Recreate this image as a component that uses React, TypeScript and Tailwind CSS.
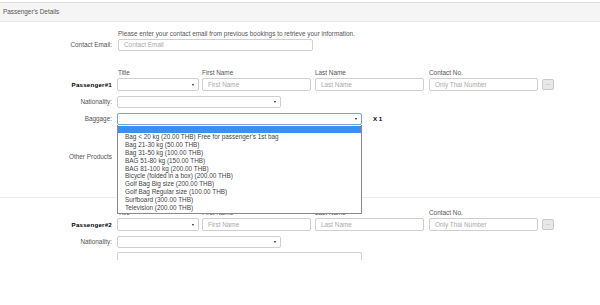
const font = { fontFamily: '"Liberation Sans", Arial, sans-serif' };

const baggageOptions = [
  "Bag < 20 kg (20.00 THB) Free for passenger's 1st bag",
  "Bag 21-30 kg (50.00 THB)",
  "Bag 31-50 kg (100.00 THB)",
  "BAG 51-80 kg (150.00 THB)",
  "BAG 81-100 kg (200.00 THB)",
  "Bicycle (folded in a box) (200.00 THB)",
  "Golf Bag Big size (200.00 THB)",
  "Golf Bag Regular size (100.00 THB)",
  "Surfboard (300.00 THB)",
  "Television (200.00 THB)",
];

function Label({ children, bold }: { children: React.ReactNode; bold?: boolean }) {
  return (
    <div
      className={
        bold
          ? "w-[112px] shrink-0 text-right text-[6.2px] font-bold tracking-[0.2px] text-black"
          : "w-[112px] shrink-0 text-right text-[6.4px] text-[#555]"
      }
    >
      {children}
    </div>
  );
}

function Select({ width, focused }: { width: string; focused?: boolean }) {
  return (
    <div
      className={`relative h-full ${width} rounded-[2px] border bg-white ${
        focused ? "border-[#7fa3cc]" : "border-[#cfcfcf]"
      }`}
    >
      <span className="absolute right-[4px] top-1/2 -translate-y-1/2 border-x-[1.5px] border-t-[2.5px] border-x-transparent border-t-[#222]" />
    </div>
  );
}

function Input({ width, placeholder }: { width: string; placeholder: string }) {
  return (
    <div
      className={`flex h-full items-center ${width} rounded-[2px] border border-[#cfcfcf] bg-white pl-[5px] text-[6.4px] text-[#aaa]`}
    >
      {placeholder}
    </div>
  );
}

function NameRow({ n }: { n: number }) {
  return (
    <>
      <div className="flex h-[8px] items-center text-[6.4px] leading-[8px] text-[#555]">
        <div className="w-[118px] shrink-0" />
        <div className="w-[84px]">Title</div>
        <div className="w-[113px]">First Name</div>
        <div className="w-[114px]">Last Name</div>
        <div>Contact No.</div>
      </div>
      <div className="mt-[1px] flex h-[13px] items-center">
        <Label bold>Passenger#{n}</Label>
        <div className="ml-[5px] flex h-full items-center">
          <Select width="w-[82px]" />
          <div className="ml-[3px] h-full">
            <Input width="w-[109px]" placeholder="First Name" />
          </div>
          <div className="ml-[4px] h-full">
            <Input width="w-[109px]" placeholder="Last Name" />
          </div>
          <div className="ml-[5px] h-full">
            <Input width="w-[109px]" placeholder="Only Thai Number" />
          </div>
          <div className="ml-[4px] flex h-[11px] w-[12px] items-center justify-center rounded-[2px] border border-[#c8c8c8] bg-[#e8e8e8] pb-[3px] text-[6px] text-[#888]">
            ...
          </div>
        </div>
      </div>
      <div className="mt-[5px] flex h-[12px] items-center">
        <Label>Nationality:</Label>
        <div className="ml-[5px] h-full">
          <Select width="w-[164px]" />
        </div>
      </div>
    </>
  );
}

export default function App() {
  return (
    <div className="h-[305px] w-[600px] overflow-hidden bg-white" style={font}>
      <div className="mt-[2px] flex h-[20px] items-center border-y border-t-[#dcdcdc] border-b-[#e6e6e6] bg-[#f5f5f5] pl-[3px] text-[6.4px] text-[#555]">
        Passenger's Details
      </div>

      <div className="mt-[8px] flex text-[6.4px] leading-[8px] text-[#555]">
        <div className="w-[118px] shrink-0" />
        Please enter your contact email from previous bookings to retrieve your information.
      </div>
      <div className="mt-[1px] flex h-[12px] items-center">
        <Label>Contact Email:</Label>
        <div className="ml-[6px] h-full">
          <Input width="w-[195px]" placeholder="Contact Email" />
        </div>
      </div>

      <div className="mt-[18px]">
        <NameRow n={1} />
      </div>

      <div className="mt-[5px] flex h-[12px] items-center">
        <Label>Baggage:</Label>
        <div className="relative ml-[5px] h-full">
          <Select width="w-[245px]" focused />
          <div className="absolute left-0 top-full z-10 w-[245px] border border-t-0 border-[#8a8a8a] bg-white pb-[1px] text-[6.4px] text-[#444]">
            <div className="mt-[1px] h-[7px] bg-[#3b8ff0]" />
            {baggageOptions.map((o) => (
              <div key={o} className="h-[7.9px] whitespace-nowrap pl-[7px] leading-[7.9px]">
                {o}
              </div>
            ))}
          </div>
        </div>
        <div className="ml-[11px] text-[6.2px] font-bold text-black">X 1</div>
      </div>

      <div className="mt-[28px] flex h-[8px] items-center">
        <Label>Other Products</Label>
      </div>

      <div className="mt-[36px] border-t border-[#ececec]" />

      <div className="mt-[11px]">
        <NameRow n={2} />
      </div>

      <div className="mt-[4px] flex">
        <div className="ml-[117px] h-[8px] w-[245px] rounded-t-[2px] border-x border-t border-[#cfcfcf]" />
      </div>
    </div>
  );
}
